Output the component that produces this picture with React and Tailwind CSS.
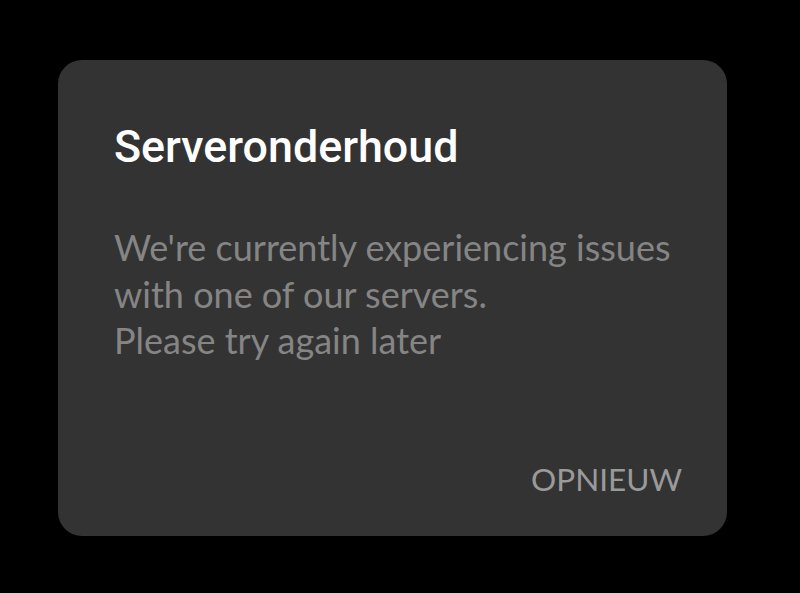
export default function App() {
  return (
    <div className="min-h-[593px] w-full bg-black pl-[58px] pt-[60px]">
      <div className="flex h-[476px] w-[669px] flex-col rounded-[24px] bg-[#333333] pl-[56px] pr-[45px] pb-[37px] pt-[61px]">
        <h1
          className="text-[44.8px] font-medium leading-[52px] text-white"
          style={{ fontFamily: "Roboto, sans-serif" }}
        >
          Serveronderhoud
        </h1>
        <p
          className="mt-[51px] text-[36px] leading-[46.7px] text-[#858585]"
          style={{ fontFamily: "Lato, sans-serif" }}
        >
          We're currently experiencing issues
          <br />
          with one of our servers.
          <br />
          Please try again later
        </p>
        <div className="mt-auto flex justify-end">
          <button
            className="text-[31.5px] leading-[40px] text-[#9a9a9a]"
            style={{ fontFamily: "Lato, sans-serif" }}
          >
            OPNIEUW
          </button>
        </div>
      </div>
    </div>
  );
}
